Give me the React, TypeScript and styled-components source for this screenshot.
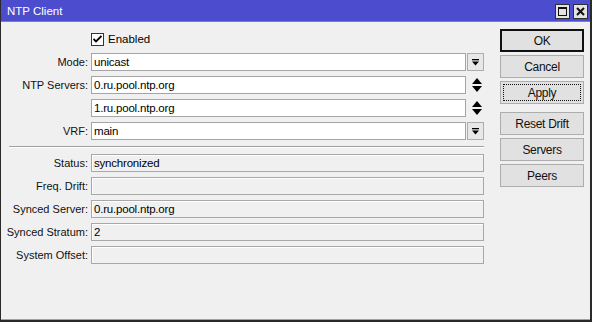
import styled, { createGlobalStyle } from 'styled-components';

const Global = createGlobalStyle`
    html, body {
        margin: 0;
        padding: 0;
        background: #f0f0f0;
    }
    body {
        font-family: "Liberation Sans", Arial, sans-serif;
        font-size: 11px;
        color: #000;
    }
`

type FieldRow = {
    label: string,
    value: string,
    control?: 'drop' | 'updown'
}

const editRows: FieldRow[] = [
    { label: 'Mode:', value: 'unicast', control: 'drop' },
    { label: 'NTP Servers:', value: '0.ru.pool.ntp.org', control: 'updown' },
    { label: '', value: '1.ru.pool.ntp.org', control: 'updown' },
    { label: 'VRF:', value: 'main', control: 'drop' },
]

const statusRows: FieldRow[] = [
    { label: 'Status:', value: 'synchronized' },
    { label: 'Freq. Drift:', value: '' },
    { label: 'Synced Server:', value: '0.ru.pool.ntp.org' },
    { label: 'Synced Stratum:', value: '2' },
    { label: 'System Offset:', value: '' },
]

const DropIcon = () => (
    <svg width="7" height="7" viewBox="0 0 7 7">
        <rect x="0" y="0" width="7" height="1.3" fill="#000" />
        <polygon points="0,2.5 7,2.5 3.5,6.5" fill="#000" />
    </svg>
)

const UpDownIcon = () => (
    <svg width="10" height="14" viewBox="0 0 10 14">
        <polygon points="5,0 10,6 0,6" fill="#000" />
        <polygon points="0,8 10,8 5,14" fill="#000" />
    </svg>
)

const App = () => {
    return (
        <Window>
            <Global />
            <TitleBar>
                <span>NTP Client</span>
                <TitleButtons>
                    <TitleBtn>
                        <svg width="9" height="9" viewBox="0 0 9 9">
                            <rect x="0.5" y="0.5" width="8" height="8" fill="none" stroke="#111" strokeWidth="1" />
                            <rect x="0" y="0" width="9" height="2" fill="#111" />
                        </svg>
                    </TitleBtn>
                    <TitleBtn>
                        <svg width="9" height="9" viewBox="0 0 9 9">
                            <path d="M1 1 L8 8 M8 1 L1 8" stroke="#111" strokeWidth="2" />
                        </svg>
                    </TitleBtn>
                </TitleButtons>
            </TitleBar>
            <Body>
                <Form>
                    <Row>
                        <Label />
                        <CheckLine>
                            <CheckBox>
                                <svg width="9" height="8" viewBox="0 0 9 8">
                                    <path d="M0.5 4 L3 6.5 L8.5 1" fill="none" stroke="#000" strokeWidth="1.8" />
                                </svg>
                            </CheckBox>
                            <span>Enabled</span>
                        </CheckLine>
                    </Row>
                    {editRows.map((r, i) => (
                        <Row key={i}>
                            <Label>{r.label}</Label>
                            <Control>
                                <Input>{r.value}</Input>
                                {r.control === 'drop'
                                    ? <DropBtn><DropIcon /></DropBtn>
                                    : <UpDown><UpDownIcon /></UpDown>}
                            </Control>
                        </Row>
                    ))}
                    <Separator />
                    {statusRows.map((r, i) => (
                        <Row key={i}>
                            <Label>{r.label}</Label>
                            <Input $readOnly>{r.value}</Input>
                        </Row>
                    ))}
                </Form>
                <Buttons>
                    <Button $default>OK</Button>
                    <Button>Cancel</Button>
                    <Button $focus>Apply</Button>
                    <Spacer />
                    <Button>Reset Drift</Button>
                    <Button>Servers</Button>
                    <Button>Peers</Button>
                </Buttons>
            </Body>
        </Window>
    );
}

export default App;

const Window = styled.div`
    width: 592px;
    height: 322px;
    box-sizing: border-box;
    border-left: 1px solid #2a2a2a;
    border-right: 2px solid #2a2a2a;
    border-bottom: 2px solid #2a2a2a;
    box-shadow: inset 0 -1px 0 #a0a0a0;
    background: #f0f0f0;
    display: flex;
    flex-direction: column;
    overflow: hidden;
`

const TitleBar = styled.div`
    height: 22px;
    margin-left: -1px;
    margin-right: -2px;
    background: #4c4cce;
    color: #fff;
    font-size: 11.5px;
    display: flex;
    align-items: center;
    justify-content: space-between;
    padding: 0 4px 0 7px;
    box-sizing: border-box;
    border-bottom: 1px solid #7a7ad8;
`

const TitleButtons = styled.div`
    display: flex;
    gap: 3px;
    margin-top: 2px;
`

const TitleBtn = styled.div`
    width: 15px;
    height: 15px;
    box-sizing: border-box;
    border: 1px solid #2e2e2e;
    background: #e3e3e3;
    display: flex;
    align-items: center;
    justify-content: center;
`

const Body = styled.div`
    flex: 1;
    display: flex;
    gap: 16px;
    align-items: flex-start;
`

const Form = styled.div`
    width: 483px;
    padding-top: 8px;
    display: flex;
    flex-direction: column;
    gap: 5px;
`

const Row = styled.div`
    display: grid;
    grid-template-columns: 87px 1fr;
    column-gap: 3px;
    height: 18px;
    align-items: center;
`

const Label = styled.div`
    text-align: right;
    white-space: nowrap;
    color: #111;
`

const CheckLine = styled.div`
    display: flex;
    align-items: center;
    gap: 4px;
    font-size: 11.5px;
`

const CheckBox = styled.div`
    width: 13px;
    height: 13px;
    box-sizing: border-box;
    border: 1px solid #333;
    background: #fff;
    display: flex;
    align-items: center;
    justify-content: center;
`

const Control = styled.div`
    display: grid;
    grid-template-columns: 1fr 17px;
    column-gap: 1px;
    height: 18px;
    align-items: stretch;
`

const Input = styled.div<{ $readOnly?: boolean }>`
    height: 18px;
    box-sizing: border-box;
    border: 1px solid ${p => p.$readOnly ? '#a8a8a8' : '#a5a5a5'};
    box-shadow: ${p => p.$readOnly ? 'inset 1px 1px 0 #fff' : 'none'};
    background: ${p => p.$readOnly ? '#f0f0f0' : '#fff'};
    padding: 0 2px;
    display: flex;
    align-items: center;
    font-size: 11.5px;
    letter-spacing: -0.2px;
    white-space: nowrap;
`

const DropBtn = styled.div`
    box-sizing: border-box;
    border: 1px solid #adadad;
    background: #e8e8e8;
    display: flex;
    align-items: center;
    justify-content: center;
`

const UpDown = styled.div`
    display: flex;
    align-items: center;
    justify-content: center;
    padding-left: 3px;
`

const Separator = styled.div`
    margin: 1px 0 1px 8px;
    border-top: 1px solid #a0a0a0;
    border-bottom: 1px solid #fff;
`

const Buttons = styled.div`
    width: 84px;
    padding-top: 7px;
    display: flex;
    flex-direction: column;
    gap: 3px;
`

const Spacer = styled.div`
    height: 2px;
`

const Button = styled.div<{ $default?: boolean, $focus?: boolean }>`
    position: relative;
    height: 23px;
    box-sizing: border-box;
    border: ${p => p.$default ? '2px solid #111' : '1px solid #adadad'};
    background: #e1e1e1;
    display: flex;
    align-items: center;
    justify-content: center;
    font-size: 12px;
    letter-spacing: -0.3px;
    color: #111;
    &::after {
        content: '';
        display: ${p => p.$focus ? 'block' : 'none'};
        position: absolute;
        inset: 2px;
        border: 1px dotted #111;
    }
`
